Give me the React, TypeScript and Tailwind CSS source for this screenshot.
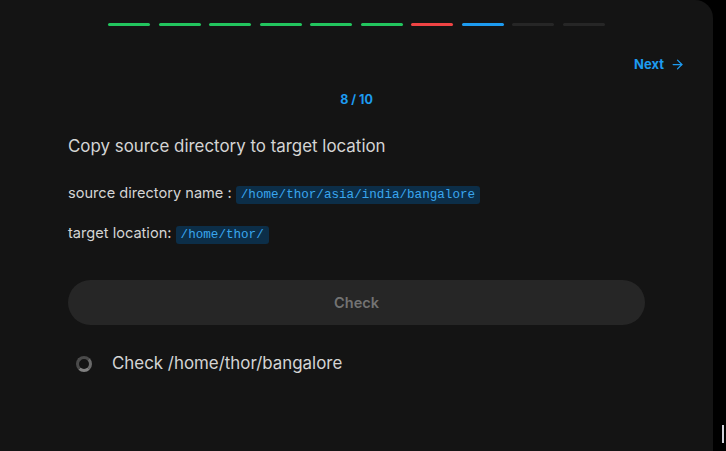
import { ArrowRight } from "lucide-react";

const steps = ["done", "done", "done", "done", "done", "done", "fail", "current", "todo", "todo"];

const stepColor: Record<string, string> = {
  done: "bg-[#22c55e]",
  fail: "bg-[#ef4444]",
  current: "bg-[#1d9bf0]",
  todo: "bg-[#262626]",
};

function Code({ children }: { children: React.ReactNode }) {
  return (
    <code className="rounded-[3px] bg-[#0c2e48] px-[5px] py-[2px] font-['Liberation_Mono',monospace] text-[12.6px] text-[#3aa6ee]">
      {children}
    </code>
  );
}

export default function App() {
  return (
    <div className="flex h-[451px] w-[726px] bg-black font-['Inter',sans-serif]">
      <div className="flex h-full w-[713px] flex-col rounded-tr-[18px] bg-[#141414]">
        <div className="flex justify-center gap-[8.5px] pt-[23px]">
          {steps.map((s, i) => (
            <div key={i} className={`h-[3px] w-[42px] rounded-full ${stepColor[s]}`} />
          ))}
        </div>

        <div className="flex justify-end pr-[28px] pt-[29px]">
          <button className="flex items-center gap-[6px] text-[13px] font-bold text-[#1d9bf0]">
            Next
            <ArrowRight size={15} strokeWidth={2} />
          </button>
        </div>

        <div className="pt-[16px] text-center text-[12.5px] font-bold text-[#1d9bf0]">8 / 10</div>

        <div className="mx-auto w-[577px] pt-[25px]">
          <h2 className="text-[16.9px] text-[#d4d4d4]">Copy source directory to target location</h2>

          <p className="mt-[23px] text-[14.6px] text-[#d4d4d4]">
            source directory name : <Code>/home/thor/asia/india/bangalore</Code>
          </p>
          <p className="mt-[18px] text-[14.6px] text-[#d4d4d4]">
            target location: <Code>/home/thor/</Code>
          </p>

          <button className="mt-[36px] flex h-[45px] w-full items-center justify-center rounded-full bg-[#262626] text-[14.5px] font-semibold text-[#737373]">
            Check
          </button>

          <div className="mt-[26px] flex items-center gap-[20px] pl-[8px]">
            <div className="h-[16px] w-[16px] rounded-full border-[3px] border-[#4a4a4a] border-r-[#6a6a6a] border-b-[#808080]" />
            <span className="text-[16.9px] text-[#d4d4d4]">Check /home/thor/bangalore</span>
          </div>
        </div>
      </div>
      <div className="mt-[425px] ml-[9px] h-[18px] w-[2px] bg-[#d0d0d8]" />
    </div>
  );
}
